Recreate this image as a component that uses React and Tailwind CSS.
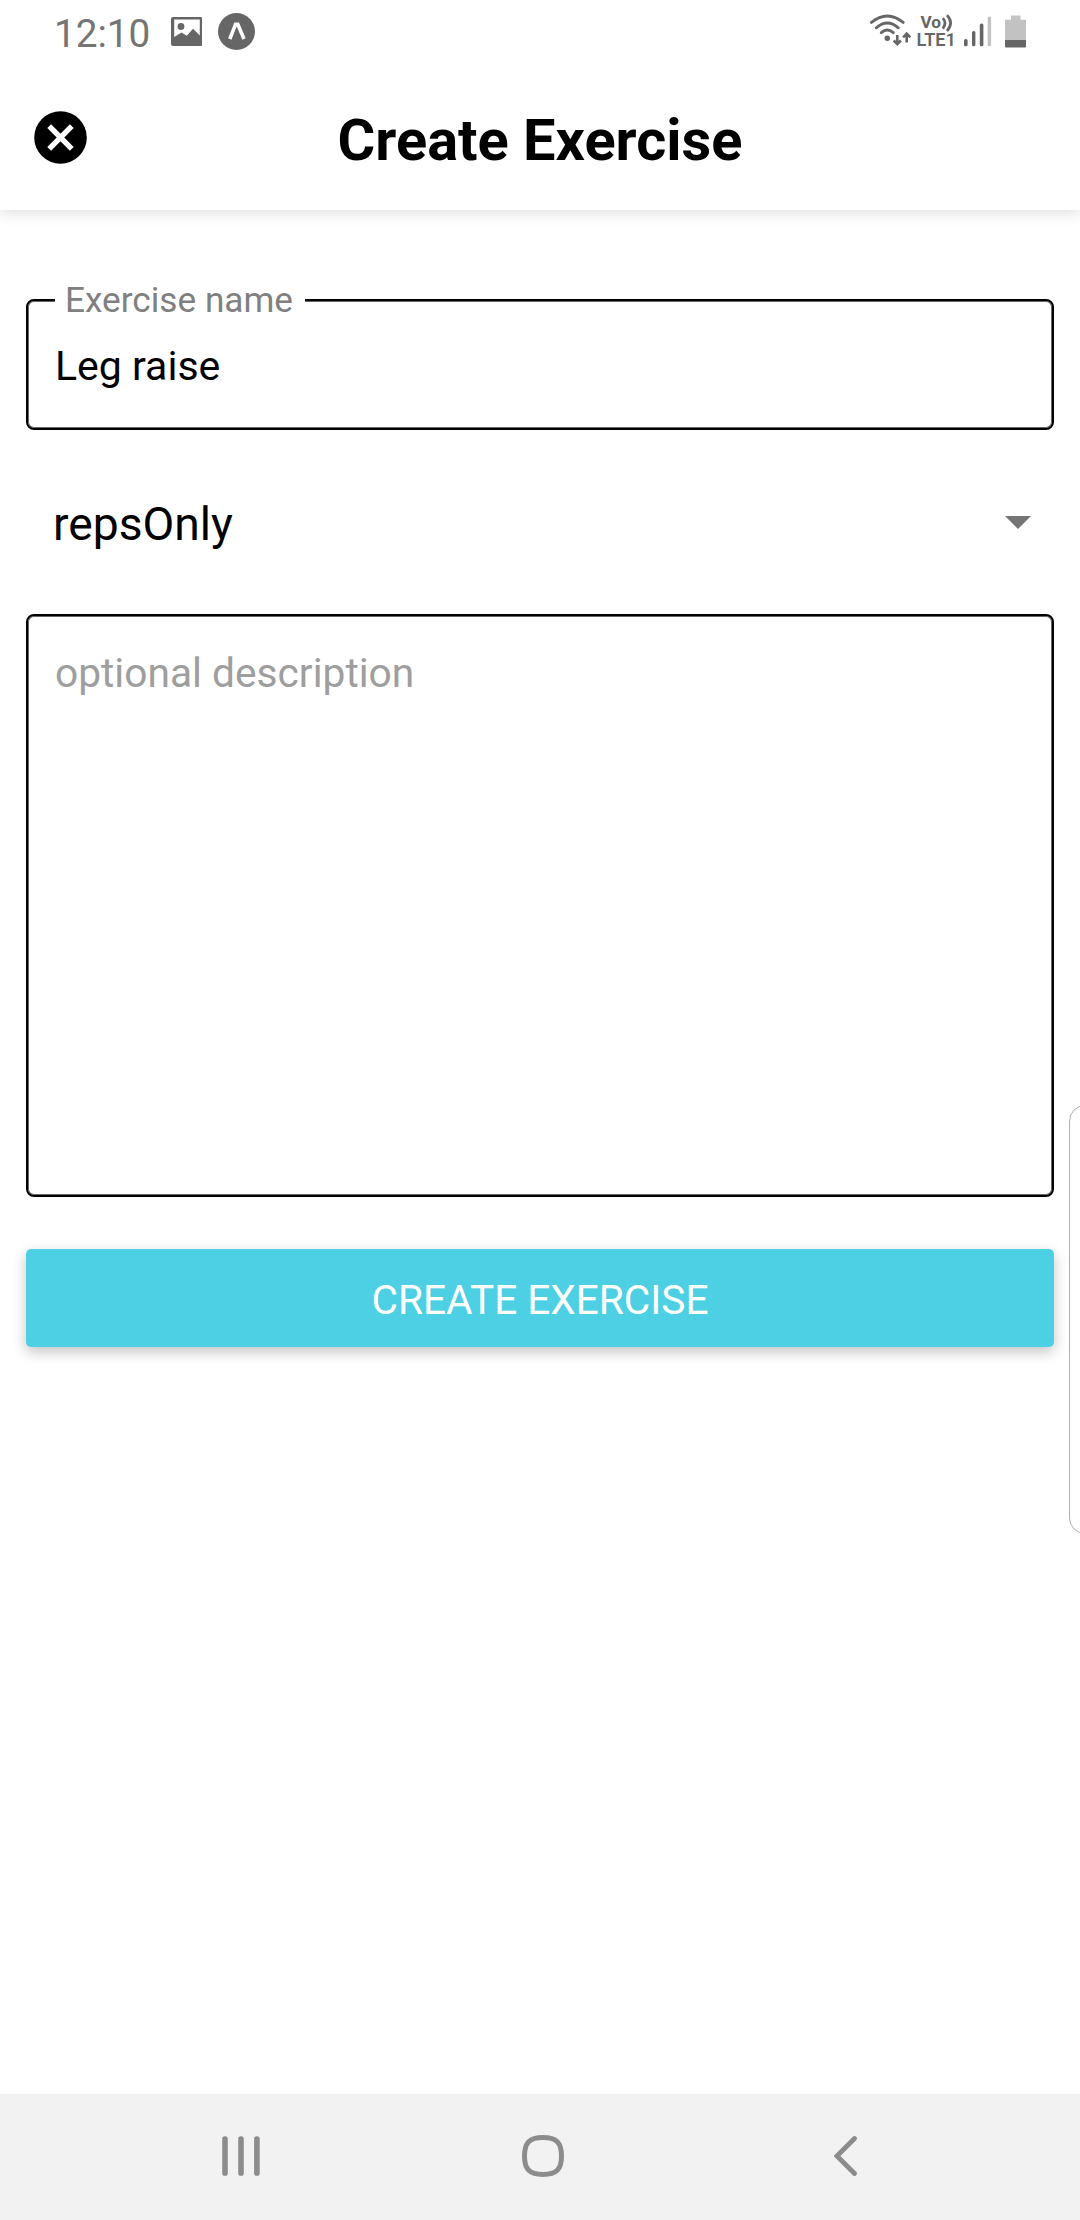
function StatusBar() {
  return (
    <div className="flex h-16 justify-between">
      <div className="flex h-16">
        <div className="ml-[54px] w-[117px] text-[38.7px] leading-[67px] text-[#757575]">12:10</div>
        <svg className="mt-[17px] h-[29px] w-[31px]" viewBox="0 0 31 29" fill="#666">
          <path
            fillRule="evenodd"
            d="M2 0H29.500Q31.500 0 31.500 2V27Q31.500 29 29.500 29H2Q0 29 0 27V2Q0 0 2 0ZM3.200 2.600V20L10.500 15.500L15.800 18.800L22 11.800L28.800 18.500V2.600Z"
          />
          <circle cx="10" cy="9.500" r="3.400" />
        </svg>
        <svg className="mt-[13px] ml-[16px] h-[37px] w-[37px]" viewBox="0 0 37 37">
          <circle cx="18.500" cy="18.500" r="18.500" fill="#666" />
          <path d="M11.800 26 17.600 11.200H19.800L26 26" fill="none" stroke="#fff" strokeWidth="3.600" />
        </svg>
      </div>
      <svg className="h-16 w-[240px]" viewBox="0 0 240 64" fill="#666" fontFamily="Roboto, sans-serif">
        <g fill="none" stroke="#666" strokeWidth="2.900" strokeLinecap="round">
          <path d="M31.400 22.400Q47.300 9.600 63.200 22.400" />
          <path d="M36.300 27.800Q47.300 18.200 58.300 27.800" />
          <path d="M41.300 32.600Q47.300 27.400 53.300 32.600" />
        </g>
        <circle cx="47.300" cy="38.300" r="2.700" />
        <g fill="none" stroke="#666" strokeWidth="2.600">
          <path d="M57.300 35V44M53.700 40.500L57.300 44.200L60.900 40.500" />
          <path d="M66.700 42.500V34M63.100 37.300L66.700 33.600L70.300 37.300" />
        </g>
        <text x="80.500" y="27.800" fontSize="17" fontWeight="700" textLength="20.500" lengthAdjust="spacingAndGlyphs">Vo</text>
        <path d="M102.800 18.200Q107.300 23 102.800 28.600M107 15.200Q114.200 23 107 31" fill="none" stroke="#666" strokeWidth="2.700" />
        <text x="76.500" y="46" fontSize="18.500" fontWeight="600" textLength="39.500" lengthAdjust="spacingAndGlyphs">LTE1</text>
        <rect x="124" y="39" width="3.600" height="7.300" rx="1.600" />
        <rect x="132" y="31" width="3.400" height="15.300" rx="1.600" />
        <rect x="139.800" y="23.500" width="3.600" height="22.800" rx="1.600" />
        <rect x="147.700" y="16.500" width="3.400" height="29.800" rx="1.600" fill="#c2c2c2" />
        <path d="M171 15.500H180.500V19.800H186V40H165V19.800H171Z" fill="#c2c2c2" />
        <path d="M165 40H186V46.500Q186 47.500 185 47.500H166Q165 47.500 165 46.500Z" />
      </svg>
    </div>
  );
}

function Header() {
  return (
    <header className="grid h-[146px] grid-cols-[104px_1fr_104px] bg-white">
      <button className="mt-[47px] ml-[34px] h-[53px] w-[53px]" aria-label="Close">
        <svg viewBox="0 0 53 53">
          <circle cx="26.500" cy="26.500" r="26.300" fill="#000" />
          <path d="M15.200 15.200L37.800 37.800M37.800 15.200L15.200 37.800" stroke="#fff" strokeWidth="5.400" strokeLinecap="butt" />
        </svg>
      </button>
      <h1 className="pt-[36px] text-center text-[57.75px] leading-[80px] font-bold text-black">Create Exercise</h1>
    </header>
  );
}

function NavBar() {
  return (
    <nav className="flex h-[126px] items-start bg-[#f2f2f2] pt-[41px] pl-[222px]">
      <svg className="mt-px h-10 w-[38px]" viewBox="0 0 38 40" fill="#8c8c8c">
        <rect x="0.200" y="0.200" width="5.600" height="39.600" rx="2.600" />
        <rect x="16.200" y="0.200" width="5.600" height="39.600" rx="2.600" />
        <rect x="32.100" y="0.200" width="5.600" height="39.600" rx="2.600" />
      </svg>
      <svg className="ml-[262px] h-[42px] w-[42px]" viewBox="0 0 42 42">
        <path
          d="M21 2.500C34.500 2.500 39.500 7.500 39.500 21S34.500 39.500 21 39.500S2.500 34.500 2.500 21S7.500 2.500 21 2.500Z"
          fill="none"
          stroke="#8c8c8c"
          strokeWidth="5"
        />
      </svg>
      <svg className="ml-[270px] h-[42px] w-6" viewBox="0 0 24 42">
        <path d="M20.500 3.500L3 21L20.500 38.500" fill="none" stroke="#8c8c8c" strokeWidth="4.800" strokeLinecap="round" />
      </svg>
    </nav>
  );
}

export default function App() {
  return (
    <div className="relative flex h-[2220px] w-[1080px] flex-col overflow-hidden bg-white font-['Roboto',sans-serif] text-black">
      <div className="shadow-[0_3px_14px_rgba(0,0,0,0.13)]">
        <StatusBar />
        <Header />
      </div>

      <main className="flex grow flex-col px-[26px] pt-[89px]">
        <div className="relative h-[131px] rounded-[8px] border-2 border-black shadow-[inset_0_0_0_1px_#666]">
          <label
            htmlFor="name"
            className="absolute -top-[23px] left-[27px] h-[44px] w-[250px] bg-white pl-[10px] text-[35.2px] leading-[44px] whitespace-nowrap text-[#808080]"
          >
            Exercise name
          </label>
          <input
            id="name"
            readOnly
            value="Leg raise"
            className="mt-[35px] ml-[27px] block h-[60px] w-[940px] bg-transparent p-0 text-[41px] leading-[60px] outline-none"
          />
        </div>

        <div className="mt-[48px] flex h-[92px] items-center justify-between pr-[23px] pl-[27px]">
          <span className="text-[46.2px] leading-[92px]">repsOnly</span>
          <svg className="-mt-[3px] h-[13px] w-[26px]" viewBox="0 0 26 13" fill="#757575">
            <path d="M0 0H26L13 13Z" />
          </svg>
        </div>

        <textarea
          readOnly
          placeholder="optional description"
          className="mt-[44px] block h-[583px] shrink-0 resize-none rounded-[8px] border-2 border-black px-[27px] pt-[27px] text-[40.7px] leading-[60px] shadow-[inset_0_0_0_1px_#666] outline-none placeholder:text-[#9e9e9e]"
        />

        <button className="mt-[52px] h-[98px] rounded-[5px] bg-[#4dd0e4] pt-[4px] text-[40.6px] leading-[94px] text-white shadow-[0_5px_14px_rgba(0,0,0,0.24)]">
          CREATE EXERCISE
        </button>
      </main>

      <NavBar />
      <div className="absolute top-[1105px] -right-[20px] h-[429px] w-[31px] rounded-l-[16px] border border-[#b0b0b0] bg-white" />
    </div>
  );
}
